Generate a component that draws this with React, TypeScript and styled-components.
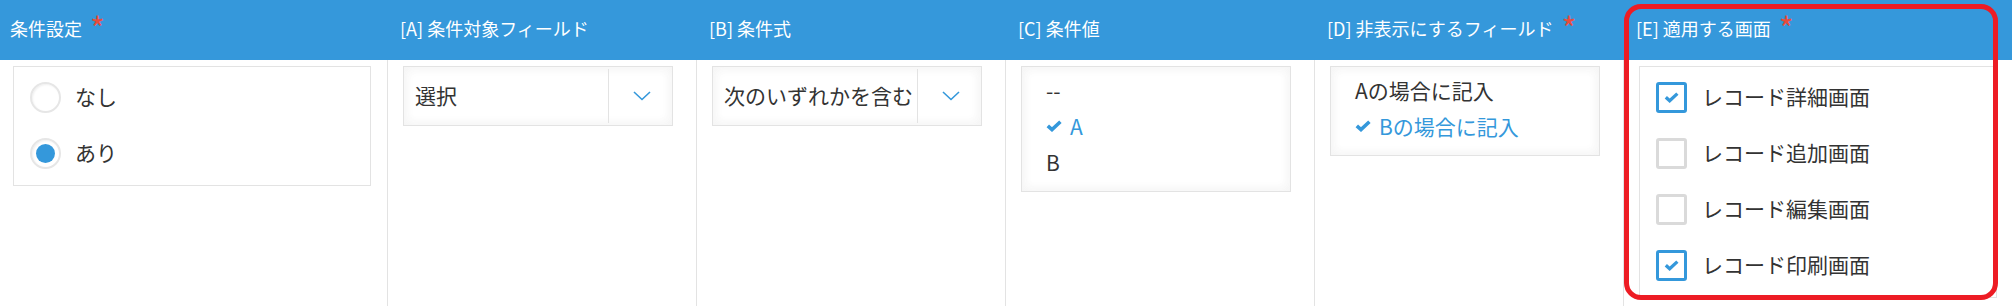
import React from 'react'
import styled, { createGlobalStyle } from 'styled-components'

const GlobalStyle = createGlobalStyle`
  html, body {
    margin: 0;
    padding: 0;
    background: #fff;
  }
  body {
    font-family: "Noto Sans CJK JP", "Noto Sans", sans-serif;
    color: #333;
  }
`

const Table = styled.div`
  display: grid;
  grid-template-columns: 387px 309px 309px 309px 309px 389px;
  height: 306px;
  overflow: hidden;
`

const Column = styled.div<{ $highlight?: boolean }>`
  display: flex;
  flex-direction: column;
  position: ${(p) => (p.$highlight ? 'relative' : 'static')};
`

const Header = styled.div<{ $first?: boolean }>`
  height: 60px;
  box-sizing: border-box;
  background: #3598db;
  color: #fff;
  font-size: 18px;
  line-height: 24px;
  padding: 16px 0 0 ${(p) => (p.$first ? '10px' : '13px')};
  white-space: nowrap;
`

const Require = styled.span`
  color: #e74c3c;
  font-size: 32px;
  line-height: 0;
  margin-left: 8px;
  vertical-align: -5px;
`

const Cell = styled.div<{ $first?: boolean }>`
  flex: 1;
  border-left: ${(p) => (p.$first ? 'none' : '1px solid #e3e3e3')};
  padding: 6px 0 0 ${(p) => (p.$first ? '13px' : '15px')};
`

const Group = styled.div`
  width: 358px;
  box-sizing: border-box;
  border: 1px solid #e3e3e3;
  padding: 2px 0 4px;
`

const OptionRow = styled.label`
  display: flex;
  align-items: center;
  height: 56px;
  padding-left: 16px;
  gap: 14px;
  font-size: 21px;
  line-height: 28px;
  color: #333;
`

const OptionText = styled.span`
  position: relative;
  top: -1px;
`

const Radio = styled.span<{ $checked?: boolean }>`
  width: 31px;
  height: 31px;
  box-sizing: border-box;
  border-radius: 50%;
  border: 2px solid #e6e6e6;
  box-shadow: 1px 1px 2px #f0f0f0 inset;
  display: flex;
  align-items: center;
  justify-content: center;
  &::after {
    content: '';
    width: 19px;
    height: 19px;
    border-radius: 50%;
    background: ${(p) => (p.$checked ? '#3498db' : 'transparent')};
  }
`

const Checkbox = styled.span<{ $checked?: boolean }>`
  width: 31px;
  height: 31px;
  box-sizing: border-box;
  border-radius: 3px;
  border: 3px solid ${(p) => (p.$checked ? '#3498db' : '#dadada')};
  display: flex;
  align-items: center;
  justify-content: center;
  margin-right: 1px;
`

const Select = styled.div`
  width: 270px;
  height: 60px;
  box-sizing: border-box;
  border: 1px solid #e3e3e3;
  box-shadow: 1px 1px 12px #f5f5f5 inset, -1px -1px 12px #f5f5f5 inset;
  display: flex;
  align-items: stretch;
`

const SelectValue = styled.div`
  flex: 1;
  display: flex;
  align-items: center;
  padding: 0 0 2px 11px;
  font-size: 21px;
  white-space: nowrap;
  overflow: hidden;
`

const SelectButton = styled.div`
  width: 60px;
  margin: 2px 0;
  border-left: 1px solid #e3e3e3;
  display: flex;
  align-items: center;
  justify-content: center;
  padding-left: 3px;
`

const MultiSelect = styled.div`
  width: 270px;
  box-sizing: border-box;
  border: 1px solid #e3e3e3;
  box-shadow: 1px 1px 12px #f5f5f5 inset, -1px -1px 12px #f5f5f5 inset;
  padding: 5px 0 11px 24px;
`

const MultiItem = styled.div<{ $selected?: boolean }>`
  height: 36px;
  display: flex;
  align-items: center;
  gap: 8px;
  font-size: 21px;
  color: ${(p) => (p.$selected ? '#3498db' : '#333')};
  white-space: nowrap;
`

const Highlight = styled.div`
  position: absolute;
  left: 1px;
  top: 4px;
  width: 374px;
  height: 296px;
  box-sizing: border-box;
  border: 5px solid #ed1c24;
  border-radius: 17px;
  pointer-events: none;
`

const Chevron = () => (
  <svg width="18" height="10" viewBox="0 0 18 10">
    <polyline points="1,1 9,8.5 17,1" fill="none" stroke="#3498db" strokeWidth="1.6" />
  </svg>
)

const Check = ({ w = 16, h = 12 }: { w?: number; h?: number }) => (
  <svg width={w} height={h} viewBox="0 0 16 12">
    <polyline
      points="1.8,5.8 6,9.6 14.4,1.8"
      fill="none"
      stroke="#3498db"
      strokeWidth="3.6"
      strokeLinejoin="miter"
    />
  </svg>
)

const screens = [
  { label: 'レコード詳細画面', checked: true },
  { label: 'レコード追加画面', checked: false },
  { label: 'レコード編集画面', checked: false },
  { label: 'レコード印刷画面', checked: true },
]

export const App = (): JSX.Element => (
  <>
    <GlobalStyle />
    <Table>
      <Column>
        <Header $first>
          条件設定<Require>*</Require>
        </Header>
        <Cell $first>
          <Group>
            <OptionRow>
              <Radio />
              <OptionText>なし</OptionText>
            </OptionRow>
            <OptionRow>
              <Radio $checked />
              <OptionText>あり</OptionText>
            </OptionRow>
          </Group>
        </Cell>
      </Column>

      <Column>
        <Header>[A] 条件対象フィールド</Header>
        <Cell>
          <Select>
            <SelectValue>選択</SelectValue>
            <SelectButton>
              <Chevron />
            </SelectButton>
          </Select>
        </Cell>
      </Column>

      <Column>
        <Header>[B] 条件式</Header>
        <Cell>
          <Select>
            <SelectValue>次のいずれかを含む</SelectValue>
            <SelectButton>
              <Chevron />
            </SelectButton>
          </Select>
        </Cell>
      </Column>

      <Column>
        <Header>[C] 条件値</Header>
        <Cell>
          <MultiSelect>
            <MultiItem>--</MultiItem>
            <MultiItem $selected>
              <Check />A
            </MultiItem>
            <MultiItem>B</MultiItem>
          </MultiSelect>
        </Cell>
      </Column>

      <Column>
        <Header>
          [D] 非表示にするフィールド<Require>*</Require>
        </Header>
        <Cell>
          <MultiSelect>
            <MultiItem>Aの場合に記入</MultiItem>
            <MultiItem $selected>
              <Check />Bの場合に記入
            </MultiItem>
          </MultiSelect>
        </Cell>
      </Column>

      <Column $highlight>
        <Header>
          [E] 適用する画面<Require>*</Require>
        </Header>
        <Cell>
          <Group>
            {screens.map((s) => (
              <OptionRow key={s.label}>
                <Checkbox $checked={s.checked}>{s.checked && <Check w={15} h={11} />}</Checkbox>
                <OptionText>{s.label}</OptionText>
              </OptionRow>
            ))}
          </Group>
        </Cell>
        <Highlight />
      </Column>
    </Table>
  </>
)

export default App
